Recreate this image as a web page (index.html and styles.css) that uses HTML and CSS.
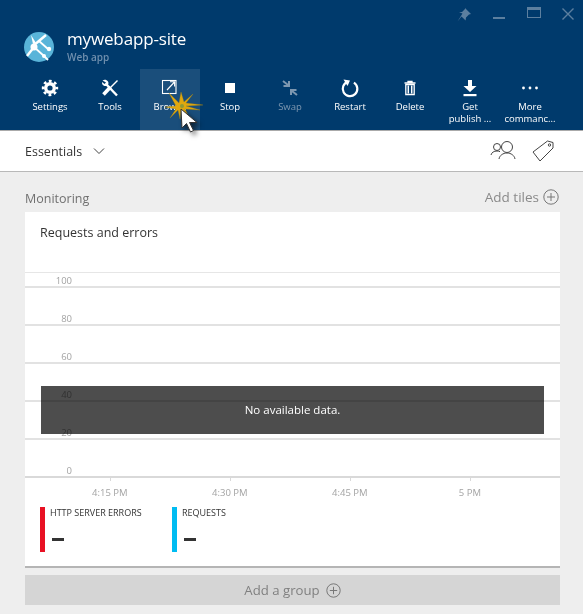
FILE: index.html
```html
<!DOCTYPE html>
<html lang="en">
<head>
    <meta charset="UTF-8">
    <meta name="viewport" content="width=device-width, initial-scale=1.0">
    <title>mywebapp-site</title>
    <link rel="stylesheet" href="styles.css">
</head>
<body>
    <div class="blade">
        <header class="header">
            <div class="window-controls">
                <svg width="16" height="16" viewBox="0 0 16 16"><path d="M9 1l6 6-2 .6-3 3-.4 3L5.500 9.500 1.500 14.500 6.500 6.500 3 5.300l3-.3 3-3z" fill="#5c7f9f"/></svg>
                <span class="win-min"></span>
                <span class="win-max"></span>
                <svg width="12" height="12" viewBox="0 0 12 12"><path d="M.5.500l11 11M11.500.500l-11 11" stroke="#5c7f9f" stroke-width="1.400" fill="none"/></svg>
            </div>
            <div class="title-row">
                <svg class="logo" width="30" height="30" viewBox="0 0 30 30">
                    <circle cx="15" cy="15" r="15" fill="#59b4d9"/>
                    <path d="M7 3l2 9 3-1z" fill="#fff"/>
                    <path d="M9 14L22 3" stroke="#fff" stroke-width="2.400" fill="none"/>
                    <path d="M15 9l9 8" stroke="#fff" stroke-width="1.800" fill="none"/>
                    <path d="M10 15l10 9 4 4" stroke="#fff" stroke-width="1.800" fill="none"/>
                    <path d="M10 15L3 24" stroke="#fff" stroke-width="2.400" fill="none"/>
                    <circle cx="10" cy="15" r="3.500" fill="#fff"/>
                    <circle cx="25" cy="17" r="2.200" fill="#fff"/>
                    <circle cx="20" cy="24" r="2" fill="#fff"/>
                </svg>
                <div class="title-text">
                    <div class="title">mywebapp-site</div>
                    <div class="subtitle">Web app</div>
                </div>
            </div>
            <nav class="commands">
                <div class="command">
                    <svg width="20" height="20" viewBox="0 0 20 20"><circle cx="10" cy="10" r="6.900" fill="none" stroke="#fff" stroke-width="2.600" stroke-dasharray="2.800 2.620" stroke-dashoffset="1.400"/><circle cx="10" cy="10" r="4.300" fill="none" stroke="#fff" stroke-width="3.400"/></svg>
                    <span>Settings</span>
                </div>
                <div class="command">
                    <svg width="20" height="20" viewBox="0 0 20 20"><path d="M6 6l11 11.500" stroke="#fff" stroke-width="2.400" fill="none"/><path d="M2.500 2.500c2-1.500 4-1 5.500 1 .8 1.500.5 3-.5 4-2 1-4 .5-5-1C2 5.500 2 4.800 2 4l2.500 2L6 4.500z" fill="#fff"/><path d="M17.500 2.500L10.500 9.500" stroke="#fff" stroke-width="1.500" fill="none"/><path d="M10.500 9L3.500 16.500" stroke="#fff" stroke-width="3.600" fill="none"/></svg>
                    <span>Tools</span>
                </div>
                <div class="command is-hover">
                    <svg width="20" height="20" viewBox="0 0 20 20"><rect x="2.500" y="2.500" width="13.500" height="13" fill="none" stroke="#fff" stroke-width="1.100"/><path d="M7 12l7.500-8M10 3.800h4.600v4.600" stroke="#fff" stroke-width="1.100" fill="none"/></svg>
                    <span>Browse</span>
                </div>
                <div class="command">
                    <svg width="20" height="20" viewBox="0 0 20 20"><rect x="5" y="5" width="10" height="10" fill="#fff"/></svg>
                    <span>Stop</span>
                </div>
                <div class="command is-disabled">
                    <svg width="20" height="20" viewBox="0 0 20 20"><path d="M3 3l5 4M9 3v5H3.500M17 17l-5-4M11 17v-5h5.500" stroke="#7d97b0" stroke-width="2" fill="none"/></svg>
                    <span>Swap</span>
                </div>
                <div class="command">
                    <svg width="20" height="20" viewBox="0 0 20 20"><path d="M7 4.200A7.300 7.300 0 1 0 13 4.200" stroke="#fff" stroke-width="2.200" fill="none" transform="rotate(8 10 11)"/><path d="M3.500 1.500l6.500 1-2.500 5.500z" fill="#fff"/></svg>
                    <span>Restart</span>
                </div>
                <div class="command">
                    <svg width="20" height="20" viewBox="0 0 20 20"><path d="M4.500 5h11M8 5V3.500h4V5" stroke="#fff" stroke-width="1.300" fill="none"/><path d="M5.800 6.500h8.400V16.500H5.800z" fill="none" stroke="#fff" stroke-width="1.300"/><path d="M8.300 7.500v8M11.700 7.500v8" stroke="#fff" stroke-width="1.500"/></svg>
                    <span>Delete</span>
                </div>
                <div class="command">
                    <svg width="20" height="20" viewBox="0 0 20 20"><path d="M8 2h4v6h4.500L10 14 3.500 8H8z" fill="#fff"/><rect x="3.500" y="16" width="13" height="2.200" fill="#fff"/></svg>
                    <span>Get<br>publish ...</span>
                </div>
                <div class="command">
                    <svg width="20" height="20" viewBox="0 0 20 20"><circle cx="3.500" cy="10" r="1.400" fill="#fff"/><circle cx="10" cy="10" r="1.400" fill="#fff"/><circle cx="16.500" cy="10" r="1.400" fill="#fff"/></svg>
                    <span>More<br>commanc...</span>
                </div>
            </nav>
        </header>

        <div class="essentials">
            <div class="essentials-label">
                Essentials
                <svg width="12" height="8" viewBox="0 0 12 8"><path d="M1 1.500l5 5 5-5" stroke="#444" stroke-width="1" fill="none"/></svg>
            </div>
            <div class="essentials-icons">
                <svg width="26" height="22" viewBox="0 0 26 22"><g fill="none" stroke="#444" stroke-width="1"><circle cx="7" cy="7" r="3.500"/><path d="M1 15c.5-2.500 3-4 6-4 1.200 0 2.200.2 3 .7"/><circle cx="17" cy="7" r="5.500"/><path d="M9 19c.5-3.500 4-6 8-6s7.500 2.500 8 6"/></g></svg>
                <svg width="22" height="22" viewBox="0 0 22 22"><g fill="none" stroke="#444" stroke-width="1"><path d="M1 12L15.500 1 21 2.500V8L8 21z"/><circle cx="17.500" cy="5" r="1.200"/></g></svg>
            </div>
        </div>

        <main class="content">
            <div class="section-head">
                <span class="section-title">Monitoring</span>
                <span class="add-tiles">Add tiles
                    <svg width="16" height="16" viewBox="0 0 16 16"><circle cx="8" cy="8" r="7.200" fill="none" stroke="#777" stroke-width="1"/><path d="M8 4v8M4 8h8" stroke="#777" stroke-width="1"/></svg>
                </span>
            </div>

            <section class="card">
                <h2 class="card-title">Requests and errors</h2>
                <div class="chart">
                    <div class="grid-row"><span>100</span></div>
                    <div class="grid-row"><span>80</span></div>
                    <div class="grid-row"><span>60</span></div>
                    <div class="grid-row"><span>40</span></div>
                    <div class="grid-row"><span>20</span></div>
                    <div class="grid-row"><span>0</span></div>
                    <div class="no-data">No available data.</div>
                </div>
                <div class="time-axis">
                    <div class="tick">4:15 PM</div>
                    <div class="tick">4:30 PM</div>
                    <div class="tick">4:45 PM</div>
                    <div class="tick">5 PM</div>
                </div>
                <div class="legend">
                    <div class="legend-item errors">
                        <div class="legend-name">HTTP SERVER ERRORS</div>
                        <div class="legend-value"></div>
                    </div>
                    <div class="legend-item requests">
                        <div class="legend-name">REQUESTS</div>
                        <div class="legend-value"></div>
                    </div>
                </div>
            </section>

            <div class="add-group">Add a group
                <svg width="15" height="15" viewBox="0 0 15 15"><circle cx="7.500" cy="7.500" r="6.700" fill="none" stroke="#777" stroke-width="1"/><path d="M7.500 3.800v7.400M3.800 7.500h7.400" stroke="#777" stroke-width="1"/></svg>
            </div>
        </main>

        <!-- click marker and mouse pointer from the screen recording -->
        <svg class="pointer" width="60" height="60" viewBox="0 0 60 60">
            <path d="M9 10l10 10 2-11 3 10 9-8-7 9 17 2-17 1 14 4-15-1 5 10-9-9-1 9-2-9-8 8 6-9-11-2 11-1z" fill="#e0a80f" stroke="#a9860f" stroke-width=".3"/>
            <circle cx="22" cy="23" r="2" fill="#8f9a35"/>
            <path class="pointer-arrow" d="M21 26l1 19 4.500-4.500 4 8.500 3-1.500-4-8 7.500 0z" fill="#fff" stroke="#333" stroke-width="1"/>
        </svg>
    </div>
</body>
</html>
```

FILE: styles.css
```css
html, body {
    margin: 0;
    padding: 0;
}
body {
    font-family: "Open Sans", "Noto Sans", sans-serif;
    background-color: #eeeeee;
}
.blade {
    position: relative;
    width: 583px;
    height: 614px;
    overflow: hidden;
    background-color: #eeeeee;
}

/* header */
.header {
    position: relative;
    height: 130px;
    background-color: #003a6c;
    color: #fff;
    box-sizing: border-box;
    padding-top: 29px;
}
.window-controls {
    position: absolute;
    top: 7px;
    left: 456px;
    display: flex;
    align-items: flex-start;
}
.window-controls svg:first-child {
    margin-right: 21px;
}
.window-controls svg:last-child {
    margin-top: 1px;
}
.win-min {
    width: 12px;
    height: 2px;
    margin-top: 10px;
    margin-right: 22px;
    background-color: #5c7f9f;
}
.win-max {
    width: 14px;
    height: 11px;
    margin-right: 21px;
    box-sizing: border-box;
    border: 1px solid #5c7f9f;
    border-top-width: 3px;
}
.title-row {
    display: flex;
    align-items: flex-start;
    padding-left: 24px;
    height: 40px;
}
.logo {
    margin-top: 3px;
}
.title-text {
    margin-left: 13px;
}
.title {
    font-size: 17px;
    line-height: 20px;
    letter-spacing: -0.15px;
}
.subtitle {
    font-size: 10px;
    font-weight: 600;
    line-height: 14px;
    margin-top: 1px;
    color: #6f8fae;
}
.commands {
    display: flex;
    padding-left: 20px;
}
.command {
    width: 60px;
    height: 61px;
    box-sizing: border-box;
    padding-top: 9px;
    text-align: center;
    font-size: 9.5px;
    line-height: 12px;
}
.command svg {
    display: block;
    margin: 0 auto 3px;
}
.command span {
    display: block;
    white-space: nowrap;
}
.is-hover {
    background-color: #1a4e7b;
}
.is-disabled {
    color: #7d97b0;
}

/* essentials bar */
.essentials {
    height: 42px;
    box-sizing: border-box;
    display: flex;
    align-items: center;
    justify-content: space-between;
    padding: 0 29px 0 25px;
    background-color: #fff;
    border-top: 1px solid #aaa;
    border-bottom: 1px solid #b8b8b8;
}
.essentials-label {
    font-size: 12.5px;
    color: #333;
    display: flex;
    align-items: center;
    gap: 11px;
}
.essentials-icons {
    display: flex;
    align-items: center;
    gap: 16px;
}

/* content */
.content {
    padding: 0 23px 0 25px;
}
.section-head {
    height: 40px;
    display: flex;
    align-items: flex-end;
    justify-content: space-between;
    padding-bottom: 5px;
    box-sizing: border-box;
}
.section-title {
    font-size: 12.5px;
    color: #707070;
}
.add-tiles {
    font-size: 13.5px;
    color: #8a8a8a;
    display: flex;
    align-items: center;
    gap: 4px;
    padding-right: 1px;
    margin-bottom: 1px;
}
.card {
    height: 356px;
    box-sizing: border-box;
    background-color: #fff;
    border-bottom: 2px solid #b5b5b5;
}
.card-title {
    margin: 0;
    padding: 12px 0 0 15px;
    height: 60px;
    box-sizing: border-box;
    font-size: 12.5px;
    line-height: 17px;
    font-weight: 400;
    color: #333;
}
.chart {
    position: relative;
    border-top: 1px solid #e6e6e6;
}
.grid-row {
    height: 38px;
    box-sizing: border-box;
    border-bottom: 2px solid #e2e2e2;
    display: flex;
    align-items: flex-end;
    justify-content: flex-end;
    padding-right: 488px;
    font-size: 9.5px;
    line-height: 14px;
    color: #a3a3a3;
}
.grid-row:first-child {
    height: 15px;
}
.grid-row:nth-last-child(2) {
    border-bottom-color: #d9d9d9;
}
.grid-row span {
    margin-bottom: -2px;
}
/* multiply keeps the grid and the labels visible through the dark band */
.no-data {
    position: absolute;
    left: 16px;
    top: 113px;
    width: 503px;
    height: 48px;
    line-height: 48px;
    text-align: center;
    font-size: 11.5px;
    color: #fff;
    background-color: #4d4d4d;
    mix-blend-mode: multiply;
}
.time-axis {
    display: flex;
    height: 29px;
    padding-left: 55px;
}
.tick {
    position: relative;
    width: 60px;
    margin-right: 60.3px;
    text-align: center;
    font-size: 9.5px;
    padding-top: 8px;
    line-height: 14px;
    color: #a3a3a3;
    box-sizing: border-box;
}
.tick::before {
    content: "";
    position: absolute;
    top: 0;
    left: 30px;
    width: 1px;
    height: 3px;
    background-color: #d9d9d9;
}
.legend {
    display: flex;
    padding-left: 15px;
}
.legend-item {
    height: 45px;
    box-sizing: border-box;
    border-left: 5px solid #e81123;
    padding-left: 5px;
    width: 132px;
}
.legend-item.requests {
    border-left-color: #00bcf2;
}
.legend-name {
    font-size: 9px;
    line-height: 12px;
    color: #333;
}
.legend-value {
    width: 12px;
    height: 3px;
    margin: 19px 0 0 2px;
    background-color: #333;
}
.add-group {
    margin-top: 7px;
    height: 30px;
    background-color: #d5d5d5;
    color: #808080;
    font-size: 13.2px;
    display: flex;
    align-items: center;
    justify-content: center;
    gap: 6px;
}

/* pointer */
.pointer {
    position: absolute;
    left: 160px;
    top: 83px;
}
.pointer-arrow {
    filter: drop-shadow(3px 3px 2.5px rgba(0, 0, 0, 0.55));
}
```
